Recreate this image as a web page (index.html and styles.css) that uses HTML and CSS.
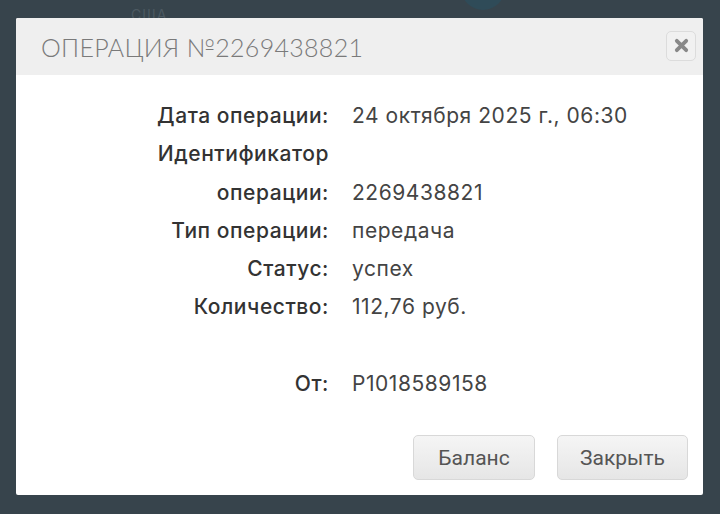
FILE: index.html
```html
<!DOCTYPE html>
<html lang="ru">
<head>
<meta charset="utf-8">
<link rel="stylesheet" href="styles.css">
</head>
<body>
<div class="backdrop">
  <div class="bg-circle"></div>
  <div class="bg-text">США</div>
  <div class="modal">
    <div class="modal-header">
      <h1 class="modal-title">ОПЕРАЦИЯ №2269438821</h1>
      <button class="close-btn" aria-label="Закрыть">
        <svg width="15" height="15" viewBox="0 0 15 15"><path d="M2.8 2.8 L12.2 12.2 M12.2 2.8 L2.8 12.2" stroke="#888" stroke-width="3.8" stroke-linecap="round"/></svg>
      </button>
    </div>
    <div class="modal-body">
      <div class="details">
        <div class="label">Дата операции:</div>
        <div class="value">24 октября 2025 г., 06:30</div>
        <div class="label">Идентификатор<br>операции:</div>
        <div class="value end">2269438821</div>
        <div class="label">Тип операции:</div>
        <div class="value">передача</div>
        <div class="label">Статус:</div>
        <div class="value">успех</div>
        <div class="label">Количество:</div>
        <div class="value">112,76 руб.</div>
        <div class="label spacer">&nbsp;</div>
        <div class="value spacer">&nbsp;</div>
        <div class="label">От:</div>
        <div class="value">P1018589158</div>
      </div>
    </div>
    <div class="modal-footer">
      <button class="btn btn-balance">Баланс</button>
      <button class="btn btn-close">Закрыть</button>
    </div>
  </div>
</div>
</body>
</html>
```
FILE: styles.css
```css
html, body {
  margin: 0;
  padding: 0;
}
body {
  width: 720px;
  height: 514px;
  overflow: hidden;
  background: #37444c;
  font-family: "Inter", "Open Sans", sans-serif;
}
.backdrop {
  position: relative;
  width: 720px;
  height: 514px;
  padding: 18px 0 0 16px;
  box-sizing: border-box;
}
.bg-circle {
  position: absolute;
  left: 461px;
  top: -34px;
  width: 44px;
  height: 44px;
  border-radius: 50%;
  background: #2f4b58;
}
.bg-text {
  position: absolute;
  left: 131px;
  top: 6px;
  font-size: 14px;
  color: #4c5961;
  letter-spacing: 1px;
}
.modal {
  position: relative;
  width: 687px;
  height: 477px;
  background: #fff;
  border-radius: 2px;
  display: flex;
  flex-direction: column;
}
.modal-header {
  height: 57px;
  background: #efefef;
  display: flex;
  align-items: center;
  justify-content: space-between;
  padding: 0 7px 0 25px;
  border-radius: 2px 2px 0 0;
}
.modal-title {
  margin: 0;
  font-family: "Lato", sans-serif;
  font-weight: 300;
  font-size: 25px;
  letter-spacing: 0.3px;
  color: #7a7a7a;
  padding-top: 1px;
}
.close-btn {
  width: 30px;
  height: 30px;
  margin-top: -2px;
  border: 1px solid #dcdcdc;
  border-radius: 5px;
  background: #f1f1f1;
  display: flex;
  align-items: center;
  justify-content: center;
  padding: 0;
}
.modal-body {
  padding-top: 22px;
  flex: 1;
}
.details {
  display: grid;
  grid-template-columns: 313px 1fr;
  column-gap: 23px;
  font-size: 21px;
  letter-spacing: 0.55px;
  line-height: 38.3px;
}
.label {
  text-align: right;
  font-weight: 500;
  color: #333;
}
.value {
  color: #444;
  font-weight: 400;
}
.value.end {
  align-self: end;
}
.modal-footer {
  display: flex;
  justify-content: flex-end;
  gap: 22px;
  padding: 0 15px 15px 0;
}
.btn {
  height: 45px;
  border: 1px solid #d8d8d8;
  border-radius: 5px;
  background: linear-gradient(#f5f5f5, #e6e6e6);
  font-family: "Roboto", sans-serif;
  font-size: 21px;
  color: #555;
  padding: 0;
}
.btn-balance {
  width: 122px;
}
.btn-close {
  width: 131px;
}
```
